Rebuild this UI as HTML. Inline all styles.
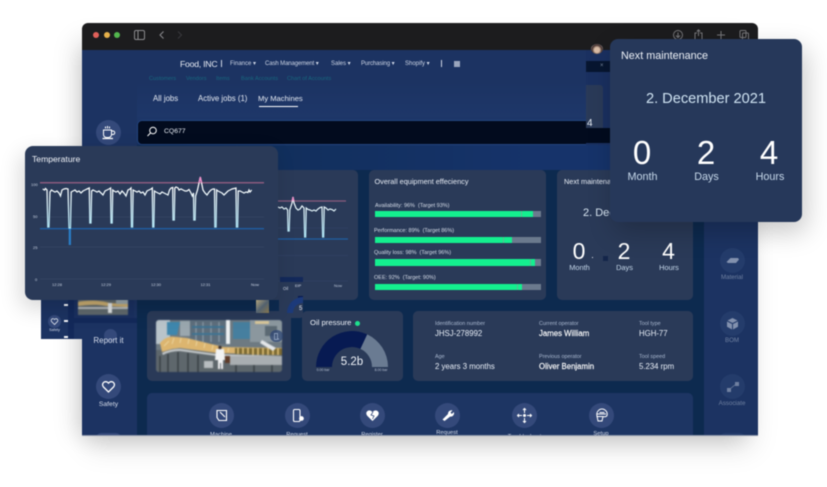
<!DOCTYPE html>
<html><head><meta charset="utf-8"><style>
*{box-sizing:border-box}
html,body{margin:0;padding:0;width:827px;height:487px;overflow:hidden;background:#fff;font-family:"Liberation Sans",sans-serif}
.a{position:absolute}
.t{position:absolute;white-space:nowrap;line-height:10px;color:#fff}
.c{transform:translateX(-50%)}
.card{position:absolute;background:#2a3a58;border-radius:5px}
.ic{position:absolute;border-radius:50%;width:25px;height:25px;background:#34497a}
.ic svg{position:absolute;left:0;top:0}
.lab{font-size:5.4px;color:#a9b8d0}
.val{font-size:7.8px;color:#e9eff8}
.barl{font-size:5.5px;color:#d5dce8}
.bar{position:absolute;left:375px;width:166px;height:6.4px;background:#6b7a8e}
.bar i{position:absolute;left:0;top:0;height:100%;background:#14ef8f}
.bar b{position:absolute;top:0;width:1px;height:100%;background:#5fb795}
</style></head><body>
<div style="position:absolute;left:0;top:0;width:827px;height:487px;filter:blur(.4px)">

<div class="a" style="left:88px;top:40px;width:664px;height:394px;background:#333;box-shadow:0 14px 26px rgba(0,0,0,.13),-10px 2px 24px rgba(0,0,0,.18)"></div>

<div class="a" style="left:82px;top:23px;width:676px;height:413px;overflow:hidden;border-radius:6px 6px 0 0;border-bottom:1px solid #8a94a8">
<div class="a" style="left:-82px;top:-23px;width:827px;height:487px">
  <!-- title bar -->
  <div class="a" style="left:82px;top:23px;width:676px;height:27px;background:#1c1c1e"></div>
  <div class="a" style="left:93px;top:32px;width:6px;height:6px;border-radius:50%;background:#e0605a"></div>
  <div class="a" style="left:103.5px;top:32px;width:6px;height:6px;border-radius:50%;background:#e5b04a"></div>
  <div class="a" style="left:114px;top:32px;width:6px;height:6px;border-radius:50%;background:#53b64e"></div>
  <svg class="a" style="left:130px;top:28px" width="60" height="14" fill="none" stroke="#8b8b8e" stroke-width="1"><rect x="4.5" y="2.5" width="10" height="9" rx="1.5"/><path d="M8 2.5v9"/><path d="M33.5 3.5l-3.5 3.5 3.5 3.5"/><path d="M48 3.5l3.5 3.5-3.5 3.5" stroke="#3a3a3d"/></svg>
  <svg class="a" style="left:670px;top:28px" width="84" height="14" fill="none" stroke="#77777a" stroke-width="1"><circle cx="8" cy="7" r="4.5"/><path d="M8 4.5v4.5M6 7.5l2 2 2-2"/><path d="M27 5h-2v7h7V5h-2M28.5 8V2M26.8 3.5l1.700-1.700 1.700 1.700"/><path d="M51 3v8M47 7h8"/><rect x="70" y="2.5" width="6" height="7" rx="1"/><rect x="72.5" y="5" width="6" height="7" rx="1"/></svg>

  <!-- top navy -->
  <div class="a" style="left:82px;top:50px;width:676px;height:386px;background:#1c3362"></div>
  <div class="a" style="left:137px;top:80px;width:449px;height:65px;background:linear-gradient(180deg,#1c3362 0%,#1e3769 55%,#17315f 100%)"></div>
  <!-- main dark -->
  <div class="a" style="left:137px;top:145px;width:567px;height:291px;background:#0d2a4f"></div>
  <div class="a" style="left:137px;top:145px;width:567px;height:25px;background:linear-gradient(90deg,#0f2d55,#16336a 70%,#16336a)"></div>

  <!-- nav -->
  <div class="t" style="left:180px;top:59px;font-size:8.7px;color:#e8ecf4;letter-spacing:-.25px">Food, INC</div>
  <div class="a" style="left:220.5px;top:60px;width:1px;height:7px;background:#cfd6e4"></div>
  <div class="t" style="left:230px;top:59px;font-size:6px;color:#cdd5e5">Finance ▾</div>
  <div class="t" style="left:265px;top:59px;font-size:6px;color:#cdd5e5;letter-spacing:-.1px">Cash Management ▾</div>
  <div class="t" style="left:331px;top:59px;font-size:6px;color:#cdd5e5">Sales ▾</div>
  <div class="t" style="left:361px;top:59px;font-size:6px;color:#cdd5e5;letter-spacing:-.1px">Purchasing ▾</div>
  <div class="t" style="left:405px;top:59px;font-size:6px;color:#cdd5e5">Shopify ▾</div>
  <div class="a" style="left:441px;top:60px;width:1px;height:7px;background:#cfd6e4"></div>
  <div class="a" style="left:454px;top:61px;width:6px;height:6px;background:#9aa6bd"></div>
  <div class="t" style="left:149px;top:74px;font-size:5.6px;color:#17687f">Customers</div>
  <div class="t" style="left:186px;top:74px;font-size:5.6px;color:#17687f">Vendors</div>
  <div class="t" style="left:216px;top:74px;font-size:5.6px;color:#17687f">Items</div>
  <div class="t" style="left:241px;top:74px;font-size:5.6px;color:#17687f">Bank Accounts</div>
  <div class="t" style="left:287px;top:74px;font-size:5.6px;color:#17687f">Chart of Accounts</div>

  <div class="t" style="left:153px;top:94px;font-size:7.8px;color:#e4e9f2">All jobs</div>
  <div class="t" style="left:198px;top:94px;font-size:7.8px;color:#e4e9f2">Active jobs (1)</div>
  <div class="t" style="left:258px;top:94px;font-size:7.6px;color:#e4e9f2">My Machines</div>
  <div class="a" style="left:259px;top:106px;width:39px;height:1px;background:#fff"></div>

  <!-- avatar etc -->
  <div class="a" style="left:586px;top:50px;width:24px;height:95px;background:#1a3060"></div>
  <div class="a" style="left:591px;top:44px;width:12px;height:10px;border-radius:50%;background:radial-gradient(circle at 50% 60%,#d9bca6 30%,#3d2a28 60%,#e8e8e8 90%)"></div>
  <div class="a" style="left:586px;top:61px;width:24px;height:11px;background:#071630"></div>
  <div class="t" style="left:600px;top:61px;font-size:6px;color:#7d8ba3">×</div>
  <div class="a" style="left:586px;top:85px;width:17px;height:50px;background:#2a3a58;border-radius:0 3px 0 0"></div>
  <div class="t" style="left:587px;top:119px;font-size:10px;color:#e8eef5">4</div>

  <!-- coffee -->
  <div class="ic" style="left:96px;top:119.5px"><svg width="25" height="25" fill="none" stroke="#fff" stroke-width="1"><path d="M7.5 10h8v4.5a3 3 0 0 1-3 3h-2a3 3 0 0 1-3-3z"/><path d="M15.5 11h1.5a1.500 1.500 0 0 1 0 3.500h-1.500"/><path d="M6.5 18.5h10.5" stroke-width="1.200"/><path d="M9.5 6.5v2M11.5 6v2.5M13.5 6.5v2"/></svg></div>

  <!-- search -->
  <div class="a" style="left:137px;top:120px;width:449px;height:25px;background:#020b1e;border:1px solid #23447e;border-right:0;border-radius:5px 0 0 5px"></div>
  <div class="a" style="left:586px;top:128px;width:24px;height:15px;background:#020b1e"></div>
  <svg class="a" style="left:146px;top:125px" width="12" height="14" fill="none" stroke="#fff" stroke-width="1"><circle cx="7" cy="5.5" r="3.3"/><path d="M4.5 8l-3 3"/></svg>
  <div class="t" style="left:164px;top:127px;font-size:6.8px;color:#e8edf5">CQ677</div>

  <!-- left sidebar -->
  <div class="ic" style="left:104px;top:329px;width:13px;height:13px;background:#34497a"></div>
  <div class="t c" style="left:108.5px;top:336px;font-size:8px;color:#d5dcea;z-index:3">Report it</div>
  <div class="ic" style="left:96px;top:374px"><svg width="25" height="25" fill="none" stroke="#fff" stroke-width="1.3"><path d="M12.5 18l-5-5a3.100 3.100 0 0 1 0-4.400 3.100 3.100 0 0 1 4.400 0l.6.600.6-.6a3.100 3.100 0 0 1 4.400 0 3.100 3.100 0 0 1 0 4.400z"/></svg></div>
  <div class="t c" style="left:108.5px;top:400px;font-size:6.8px;color:#d5dcea">Safety</div>
  <div class="a" style="left:96px;top:433px;width:25px;height:10px;border-radius:5px;background:#34497a"></div>

  <!-- right sidebar -->
  <div class="a" style="left:704px;top:145px;width:54px;height:291px;background:#1c3362"></div>
  <div class="ic" style="left:719.5px;top:247.5px;background:#243c6b"><svg width="25" height="25"><path d="M6.5 14l4-4h7.500l1 1.500-3 3.500h-8z" fill="#8291ae"/></svg></div>
  <div class="t c" style="left:732px;top:272.5px;font-size:6.2px;color:#6f80a0">Material</div>
  <div class="ic" style="left:719.5px;top:310.5px;background:#243c6b"><svg width="25" height="25" fill="#8291ae"><path d="M12.5 7l5 2.500-5 2.500-5-2.500zM7 10.500l5 2.500v5.500l-5-2.700zM18 10.500l-5 2.500v5.500l5-2.700z"/></svg></div>
  <div class="t c" style="left:732px;top:336px;font-size:6.2px;color:#6f80a0">BOM</div>
  <div class="ic" style="left:719.5px;top:374px;background:#243c6b"><svg width="25" height="25" fill="#6f80a0"><rect x="15" y="8" width="4" height="4"/><rect x="7" y="14" width="4" height="4"/><path d="M10 15l6-5" stroke="#6f80a0" stroke-width=".7"/></svg></div>
  <div class="t c" style="left:732px;top:399px;font-size:6.2px;color:#6f80a0">Associate</div>
  <div class="a" style="left:719.5px;top:433px;width:25px;height:10px;border-radius:5px;background:#243c6b"></div>

  <!-- back temp card -->
  <div class="card" style="left:150px;top:170px;width:208px;height:130px"></div>
  <svg class="a" style="left:0;top:0" width="827" height="487" fill="none">
    <defs><linearGradient id="g2" gradientUnits="userSpaceOnUse" x1="0" y1="197" x2="0" y2="238"><stop offset="0" stop-color="#fff"/><stop offset="1" stop-color="#a9e2f3"/></linearGradient></defs>
    <path d="M278 228h70M278 255.5h70M278 281h70" stroke="#35466a" stroke-width=".6"/>
    <path d="M278 201h68" stroke="#8a5b7e" stroke-width="1.3"/>
    <path d="M278 239h70" stroke="#1f5ea3" stroke-width="1.3"/>
    <path d="M278 207L280 208 282 207 284 209 286 208 287.6 210 288 231 289.2 231 289.8 210 292 203 293 197 294 203 296 208 298 210 300 209 302 206 304 208 304.6 237 305.7 237 306.2 208 308 209.5 310 210 312 211 314 210 316 211 318 209 320 207.5 322 207 322.6 237 323.7 237 324.2 207 326 208 328 210 330 209 332 209.5 334 211 336 209" stroke="url(#g2)" stroke-width="1.2"/>
    <path d="M292 201l1-4 1 4" stroke="#e98cc5" stroke-width="1.2"/>
  </svg>
  <div class="t c" style="left:338px;top:281px;font-size:4px;color:#b8c3d6">Now</div>

  <!-- OEE card -->
  <div class="card" style="left:369px;top:170px;width:177px;height:130px"></div>
  <div class="t" style="left:374.5px;top:177px;font-size:7.3px;color:#e8edf5">Overall equipment effeciency</div>
  <div class="t barl" style="left:375px;top:201px">Availability: 96%&nbsp; (Target 93%)</div>
  <div class="bar" style="top:211px"><i style="width:158px"></i><b style="left:146px"></b></div>
  <div class="t barl" style="left:374px;top:226px">Performance: 89%&nbsp; (Target 86%)</div>
  <div class="bar" style="top:237px"><i style="width:137px"></i><b style="left:128px"></b></div>
  <div class="t barl" style="left:374px;top:248px">Quality loss: 98%&nbsp; (Target 96%)</div>
  <div class="bar" style="top:259.3px"><i style="width:160px"></i><b style="left:155px"></b></div>
  <div class="t barl" style="left:374px;top:273px">OEE: 92%&nbsp; (Target: 90%)</div>
  <div class="bar" style="top:284px"><i style="width:147px"></i><b style="left:142px"></b></div>

  <!-- Next back -->
  <div class="card" style="left:556.5px;top:170px;width:136.5px;height:130px"></div>
  <div class="t" style="left:564px;top:177px;font-size:7.3px;color:#e8edf5">Next maintena</div>
  <div class="t" style="left:583px;top:208px;font-size:11px;color:#d8e6f2">2. Dec</div>
  <div class="t c" style="left:579px;top:246px;font-size:23px;color:#fff">0</div>
  <div class="t c" style="left:624px;top:246px;font-size:23px;color:#fff">2</div>
  <div class="t c" style="left:668.5px;top:246px;font-size:23px;color:#fff">4</div>
  <div class="t c" style="left:579.5px;top:263px;font-size:7.4px;color:#c6d8ea">Month</div>
  <div class="t c" style="left:624.5px;top:263px;font-size:7.4px;color:#c6d8ea">Days</div>
  <div class="t c" style="left:669px;top:263px;font-size:7.4px;color:#c6d8ea">Hours</div>
  <div class="a" style="left:591.5px;top:256.5px;width:1.5px;height:1.5px;background:#dfe6ef"></div>
  <div class="a" style="left:603px;top:256px;width:5px;height:5px;background:#14254a"></div>

  <!-- Image card -->
  <div class="card" style="left:147.3px;top:311px;width:143.5px;height:70px"></div>
  <svg class="a" style="left:156px;top:320px;border-radius:3px;filter:blur(.5px)" width="126" height="52" viewBox="156 320 126 52">
    <rect x="156" y="320" width="126" height="52" fill="#6e7a82"/>
    <rect x="156" y="320" width="14" height="24" fill="#b9c4ca"/>
    <path d="M167 322h13l-3 13h-10z" fill="#3f87ad"/>
    <rect x="180" y="321" width="10" height="15" fill="#9aa7ae"/>
    <rect x="190" y="320" width="36" height="24" fill="#5d6e7c"/>
    <path d="M196 322v20M203 322v20M211 322v20M219 322v20" stroke="#8d9da8" stroke-width="1.2"/>
    <path d="M192 327h32M192 334h32" stroke="#3f7392" stroke-width="2"/>
    <rect x="226" y="320" width="4" height="24" fill="#eef2f4"/>
    <rect x="233" y="322" width="17" height="17" fill="#467f9f"/>
    <rect x="250" y="320" width="32" height="22" fill="#8b979e"/>
    <rect x="255" y="321" width="14" height="3" fill="#d9c79a"/>
    <path d="M265 326h12v10h-12z" fill="#5b6973"/>
    <rect x="156" y="350" width="126" height="22" fill="#5e676c"/>
    <path d="M160 343Q165 337 172 336.5L187 338 223 347 282 348V355L217 353 180 348 172 349 162 352z" fill="#dcb56f"/>
    <path d="M235 348L282 348.5V355L235 354z" fill="#7c6a33"/>
    <path d="M238 348v6M243 348v6M248 348v6M253 348v7M258 348v7M263 348v7M268 348v7M273 348v7M278 348v7" stroke="#e6c57a" stroke-width="1.5"/>
    <path d="M164 346l5-5M172 344l2-6M180 343l1-5M188 344l1-5M196 346l1-5M204 348l1-5M212 350l1-5M220 351l1-4M228 352l.5-4" stroke="#efdcab" stroke-width=".8"/>
    <path d="M162 353Q170 349 180 349L217 354 282 356V358L217 356 180 351Q170 351 163 355z" fill="#c6cacc"/>
    <path d="M262 340l14 8-3 3-13-8z" fill="#e4e7e9"/>
    <rect x="230" y="356" width="52" height="9" fill="#a9aeb1"/>
    <path d="M160 356v16M168 354v18M178 352v20M188 353v19M198 355v17M236 365v7M254 365v7M272 365v7" stroke="#363c42" stroke-width="1.4"/>
    <rect x="204" y="361" width="9" height="7" fill="#b8bdc0"/>
    <path d="M216 349h8l1 11h-2v9h-2v-6h-1v6h-2v-9h-3z" fill="#f2f3f4"/>
    <circle cx="220" cy="347.5" r="1.7" fill="#3b302c"/>
    <rect x="225" y="356" width="5" height="7" fill="#5e3c2a"/>
  </svg>
  <div class="a" style="left:270px;top:329.5px;width:12.5px;height:12.5px;border-radius:50%;background:rgba(46,70,115,.75)"></div>
  <svg class="a" style="left:270px;top:329.5px" width="13" height="13" fill="none" stroke="#9fb0cc" stroke-width=".7"><path d="M4.5 3.5h3v6h-3zM8 8.5l1 1"/></svg>

  <!-- Oil -->
  <div class="card" style="left:302px;top:311px;width:100.5px;height:70px"></div>
  <div class="t" style="left:310px;top:318px;font-size:7.7px;color:#eef2f8">Oil pressure</div>
  <div class="a" style="left:354.5px;top:320.5px;width:5px;height:5px;border-radius:50%;background:#1ee08d"></div>
  <svg class="a" style="left:300px;top:320px" width="104" height="50">
    <path d="M16 47A36 36 0 0 1 67.2 14.4L60.45 28.9A20 20 0 0 0 32 47Z" fill="#071a52"/>
    <path d="M67.2 14.4A36 36 0 0 1 88 47H72A20 20 0 0 0 60.45 28.9Z" fill="#6a7b92"/>
  </svg>
  <div class="t c" style="left:352px;top:357px;font-size:11.5px;color:#eef2f8">5.2b</div>
  <div class="t c" style="left:323px;top:365px;font-size:3.5px;color:#b8c3d6">0.00 bar</div>
  <div class="t c" style="left:381px;top:365px;font-size:3.5px;color:#b8c3d6">8.00 bar</div>

  <!-- Info -->
  <div class="card" style="left:413px;top:311px;width:280px;height:70px"></div>
  <div class="t lab" style="left:435px;top:319px">Identification number</div>
  <div class="t val" style="left:435px;top:328.5px">JHSJ-278992</div>
  <div class="t lab" style="left:435px;top:352px">Age</div>
  <div class="t val" style="left:435px;top:361.5px">2 years 3 months</div>
  <div class="t lab" style="left:539px;top:319px">Current operator</div>
  <div class="t val" style="left:539px;top:328.5px;color:#fff;-webkit-text-stroke:.15px #fff">James William</div>
  <div class="t lab" style="left:539px;top:352px">Previous operator</div>
  <div class="t val" style="left:539px;top:361.5px;color:#fff;-webkit-text-stroke:.15px #fff">Oliver Benjamin</div>
  <div class="t lab" style="left:639px;top:319px">Tool type</div>
  <div class="t val" style="left:639px;top:328.5px">HGH-77</div>
  <div class="t lab" style="left:639px;top:352px">Tool speed</div>
  <div class="t val" style="left:639px;top:361.5px">5.234 rpm</div>

  <!-- actions -->
  <div class="a" style="left:147px;top:393px;width:546px;height:50px;background:#1d3563;border-radius:5px"></div>
  <div class="ic" style="left:208.5px;top:403px"><svg width="25" height="25" fill="none" stroke="#fff" stroke-width="1.1"><path d="M8 7.5h9.5v10h-7.500l-2-3z"/><path d="M11 9l5 5"/></svg></div>
  <div class="t c" style="left:221px;top:429.5px;font-size:5.8px;color:#d5dcea">Machine</div>
  <div class="ic" style="left:284.5px;top:403px"><svg width="25" height="25" fill="none" stroke="#fff" stroke-width="1.1"><rect x="8.5" y="6.5" width="6.5" height="12" rx="1.2"/><circle cx="16.5" cy="15.5" r="1.8" fill="#fff"/></svg></div>
  <div class="t c" style="left:297px;top:429.5px;font-size:5.8px;color:#d5dcea">Request</div>
  <div class="ic" style="left:359.5px;top:403px"><svg width="25" height="25"><path d="M12.5 18l-5.300-5.300a3.100 3.100 0 0 1 4.400-4.400l.9.900.9-.9a3.100 3.100 0 0 1 4.400 4.400z" fill="#fff"/><path d="M13 9l-2 3 3 1-1.500 3" stroke="#34497a" stroke-width=".8" fill="none"/></svg></div>
  <div class="t c" style="left:372px;top:429.5px;font-size:5.8px;color:#d5dcea">Register</div>
  <div class="ic" style="left:434.5px;top:403px"><svg width="25" height="25" fill="#fff"><path d="M7.5 16.5l5.500-5.500a3.400 3.400 0 0 1 4.500-3.500l-2 2 1.300 1.500 2-2a3.400 3.400 0 0 1-3.700 4.600l-5.600 4.400z"/></svg></div>
  <div class="t c" style="left:447px;top:428px;font-size:5.8px;color:#d5dcea">Request</div>
  <div class="ic" style="left:512px;top:403px"><svg width="25" height="25" fill="none" stroke="#fff" stroke-width="1"><path d="M12.5 5.5v4.500M12.5 15v4.500M5.5 12.500h4.500M15 12.500h4.500"/><path d="M11 7l1.500-1.500L14 7M11 18l1.500 1.500L14 18M7 11l-1.500 1.500L7 14M18 11l1.500 1.500L18 14"/><circle cx="12.5" cy="12.5" r="1" fill="#fff"/></svg></div>
  <div class="t c" style="left:524.5px;top:432px;font-size:5.8px;color:#d5dcea">Troubleshoot</div>
  <div class="ic" style="left:588.5px;top:403px"><svg width="25" height="25" fill="none" stroke="#fff" stroke-width="1"><path d="M8 13c-1-4 2-7 5-7s6 3 5 6.500c-1 2-3 1-4.500 1H8zM8 13l1 5h4l1-4.500M10.5 9.500h5M8 11h9"/></svg></div>
  <div class="t c" style="left:601px;top:428.5px;font-size:5.8px;color:#d5dcea">Setup</div>
</div></div>

<!-- Thumbnail strip outside window -->
<div class="a" style="left:41px;top:295px;width:27px;height:44px;background:#1c3362"></div>
<div class="a" style="left:68px;top:295px;width:14px;height:44px;background:#13295a"></div>
<div class="a" style="left:74px;top:323px;width:8px;height:16px;background:#1c3362"></div>
<div class="a" style="left:64px;top:304px;width:4px;height:2px;background:#f2f4f8"></div>
<div class="a" style="left:64px;top:320px;width:4px;height:2px;background:#f2f4f8"></div>
<div class="a" style="left:64px;top:336px;width:4px;height:2px;background:#f2f4f8"></div>
<div class="a" style="left:48px;top:315px;width:13px;height:13px;border-radius:50%;background:#34497a"></div>
<svg class="a" style="left:48px;top:315px" width="13" height="13" fill="none" stroke="#e8edf5" stroke-width=".8"><path d="M6.5 9.500l-3-3a1.700 1.700 0 0 1 3-2 1.700 1.700 0 0 1 3 2z"/></svg>
<div class="t c" style="left:54.5px;top:325px;font-size:3.8px;color:#d5dcea">Safety</div>
<!-- thumb images -->
<div class="a" style="left:74px;top:295px;width:60px;height:23px;background:#1a3060"></div>
<div class="a" style="left:82px;top:318px;width:55px;height:5px;background:#13295a"></div>
<svg class="a" style="left:78px;top:298px;filter:blur(.5px)" width="50" height="17" viewBox="0 0 50 17"><rect width="50" height="17" fill="#5f686c"/><path d="M0 4c8-2 22-2 32 1l18 1v3L28 8C18 6 8 7 0 8z" fill="#c9ac70"/><rect x="0" y="9" width="50" height="2" fill="#b9bdbf"/><rect x="30" y="5" width="4" height="10" fill="#dfe2e3"/><rect x="38" y="0" width="12" height="6" fill="#97a3a8"/></svg>
<div class="a" style="left:256px;top:300px;width:13px;height:13px;background:linear-gradient(135deg,#c8b98c,#5a6a78 50%,#8a7a50)"></div>
<!-- small card peeking under temperature -->
<div class="a" style="left:279px;top:283px;width:24px;height:35px;background:#2a3a58;border-radius:0 0 3px 3px"></div>
<div class="a" style="left:280px;top:277px;width:23px;height:5px;background:#13295a"></div>
<div class="a" style="left:298px;top:296px;width:5px;height:7px;background:#071a52"></div>
<div class="t" style="left:283px;top:284px;font-size:4.2px;color:#d5dcea">Oil</div>
<div class="t" style="left:295px;top:281px;font-size:3.8px;color:#d5dcea">EIP</div>
<svg class="a" style="left:279px;top:296px" width="25" height="20"><path d="M8 17a16 16 0 0 1 16-16v6a10 10 0 0 0-10 10z" fill="#1c3a7a"/></svg>
<div class="t" style="left:299px;top:304px;font-size:6px;color:#e8edf5">5</div>

<!-- Temperature -->
<div class="a" style="left:25px;top:146px;width:253px;height:154px;background:#2a3a58;border-radius:8px;box-shadow:-4px 8px 22px rgba(0,0,0,.16)"></div>
<div class="t" style="left:32px;top:154px;font-size:8.6px;color:#f0f3f8">Temperature</div>
<svg class="a" style="left:0;top:0" width="827" height="487" fill="none">
  <defs><linearGradient id="g1" gradientUnits="userSpaceOnUse" x1="0" y1="186" x2="0" y2="228"><stop offset="0" stop-color="#fff"/><stop offset="1" stop-color="#aee4f4"/></linearGradient></defs>
  <path d="M40 217h224M40 247h224M40 279h224" stroke="#3a4a6a" stroke-width=".6"/>
  <path d="M40 182.7h224" stroke="#8a5b7e" stroke-width="1.5"/>
  <path d="M40 228.7h224" stroke="#1f5ea3" stroke-width="1.3"/>
  <path d="M68.700 228h2.300v17h-2.300z" fill="#2a7cc4"/>
  <path d="M42.7 189L44.5 190 45.5 188.5 47 190 47.8 227 49 227 50 192 51.5 190 53 191 55 192 57 191 59 193 60.5 196 62 190 64 189 66 188.5 68 189 69 228 70.5 228 71.2 192 73 191 75 190 77 192 79 191 81 193 83 191 85 190 87 189 89.3 188 89.8 223 91 223 91.6 191 93 190 95 191 97 192 99 191 101 193 103 195 105 191 107 190 109 189 110.6 188 111 223 112.2 223 112.7 190 114 191 116 192 118 191 120 194 122 191 124 193 126 196 128 190 130 189 131 188 131.4 227 132.6 227 133.1 190 135 191 137 192 139 191 141 193 143 192 145 195 147 191 149 190 151 189 152.3 188 152.7 227 153.9 227 154.4 191 156 192 158 193 160 194 162 192 164 193 166 194 168 195 169.5 190 171 188 172.7 187.5 173 220 174.3 220 174.8 188 176 187 178 188 179 190 181 189 183 190 185 191 187 191 189 189.5 191 193 192.3 196 193.5 193 193.8 220 195.1 220 195.6 196 197.5 190 199 183 200.3 177 201.6 183 203 190 205 193 207 195 209 192 211 190 213 189 214.5 189 214.8 227 216.1 227 216.6 190 218 191 220 192 222 193 224 195 226 193 228 191 230 190 232 189 236 188 236.4 227 237.7 227 238.2 191 240 191 242 192 244 193 246 192 248 192.5 249 190 250 192 251.7 190" stroke="url(#g1)" stroke-width="1.25"/>
  <path d="M199 182.7l1.300-5.700 1.300 5.700" stroke="#e98cc5" stroke-width="1.4"/>
</svg>
<div class="t" style="left:31px;top:180px;font-size:4px;color:#c8d2e2">100</div>
<div class="t" style="left:33px;top:211.5px;font-size:4px;color:#c8d2e2">50</div>
<div class="t" style="left:33px;top:243px;font-size:4px;color:#c8d2e2">25</div>
<div class="t" style="left:35px;top:274.5px;font-size:4px;color:#c8d2e2">0</div>
<div class="t c" style="left:57px;top:280px;font-size:4px;color:#c8d2e2">12:28</div>
<div class="t c" style="left:106px;top:280px;font-size:4px;color:#c8d2e2">12:29</div>
<div class="t c" style="left:156px;top:280px;font-size:4px;color:#c8d2e2">12:30</div>
<div class="t c" style="left:205.5px;top:280px;font-size:4px;color:#c8d2e2">12:31</div>
<div class="t c" style="left:255px;top:280px;font-size:4px;color:#c8d2e2">Now</div>

<!-- Next maintenance popup -->
<div class="a" style="left:610px;top:39px;width:192px;height:183px;background:#26385a;border-radius:8px;box-shadow:4px 10px 26px rgba(0,0,0,.22)"></div>
<div class="t" style="left:621px;top:51px;font-size:10.8px;color:#eef2f8">Next maintenance</div>
<div class="t c" style="left:706px;top:94px;font-size:14.6px;color:#cfe3f2">2. December 2021</div>
<div class="t c" style="left:642px;top:148px;font-size:33px;color:#fff">0</div>
<div class="t c" style="left:706px;top:148px;font-size:33px;color:#fff">2</div>
<div class="t c" style="left:769px;top:148px;font-size:33px;color:#fff">4</div>
<div class="t c" style="left:642.5px;top:172px;font-size:10.8px;color:#c6d8ea">Month</div>
<div class="t c" style="left:706.5px;top:172px;font-size:10.8px;color:#c6d8ea">Days</div>
<div class="t c" style="left:770px;top:172px;font-size:10.8px;color:#c6d8ea">Hours</div>
</div>
</body></html>
